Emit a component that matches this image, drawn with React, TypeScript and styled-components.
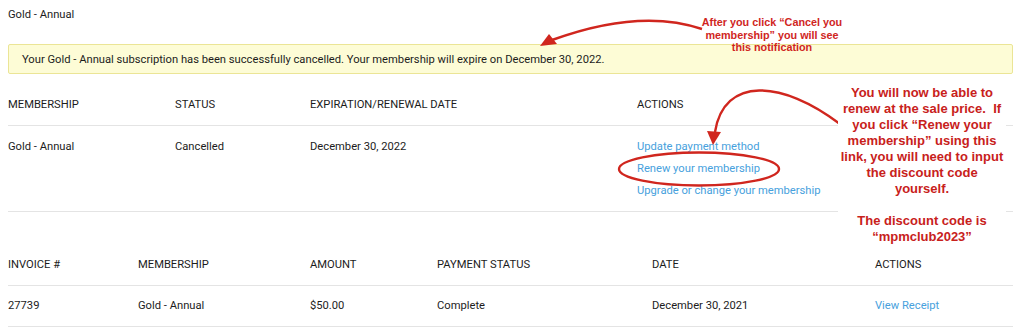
import React from "react";
import styled, { createGlobalStyle } from "styled-components";

const GlobalStyle = createGlobalStyle`
  body {
    margin: 0;
    background: #ffffff;
    font-family: Roboto, "Liberation Sans", Arial, sans-serif;
    font-size: 11.2px;
    color: #1c1c1c;
  }
`;

const ANNOTATION_RED = "#d0261e";

const membershipCols = "167px 135px 327px 1fr";
const invoiceCols = "130px 172px 127px 215px 223px 1fr";

const App = () => {
  return (
    <Page>
      <GlobalStyle />
      <Title>Gold - Annual</Title>
      <Notice>
        Your Gold - Annual subscription has been successfully cancelled. Your membership will expire on
        December 30, 2022.
      </Notice>

      <Table>
        <HeadRow $cols={membershipCols} $top={23}>
          <Cell>MEMBERSHIP</Cell>
          <Cell>STATUS</Cell>
          <Cell>EXPIRATION/RENEWAL DATE</Cell>
          <Cell>ACTIONS</Cell>
        </HeadRow>
        <BodyRow $cols={membershipCols} $top={10} $bottom={9}>
          <Cell $lh={22}>Gold - Annual</Cell>
          <Cell $lh={22}>Cancelled</Cell>
          <Cell $lh={22}>December 30, 2022</Cell>
          <Actions>
            <Link>Update payment method</Link>
            <Link>Renew your membership</Link>
            <Link>Upgrade or change your membership</Link>
          </Actions>
        </BodyRow>
      </Table>

      <Table>
        <HeadRow $cols={invoiceCols} $top={45}>
          <Cell>INVOICE #</Cell>
          <Cell>MEMBERSHIP</Cell>
          <Cell>AMOUNT</Cell>
          <Cell>PAYMENT STATUS</Cell>
          <Cell>DATE</Cell>
          <Cell>ACTIONS</Cell>
        </HeadRow>
        <BodyRow $cols={invoiceCols} $top={12} $bottom={12}>
          <Cell>27739</Cell>
          <Cell>Gold - Annual</Cell>
          <Cell>$50.00</Cell>
          <Cell>Complete</Cell>
          <Cell>December 30, 2021</Cell>
          <Link>View Receipt</Link>
        </BodyRow>
      </Table>

      <Marks width="1024" height="332" viewBox="0 0 1024 332">
        <path d="M702 29 Q640 8 552 40" fill="none" stroke={ANNOTATION_RED} strokeWidth="2.4" />
        <polygon points="540,46 549,34 557,44" fill={ANNOTATION_RED} />
        <path d="M840 124 C782 80 724 76 715 132" fill="none" stroke={ANNOTATION_RED} strokeWidth="2.4" />
        <polygon points="713,145 707,131 721,132" fill={ANNOTATION_RED} />
        <ellipse cx="699" cy="169" rx="80" ry="16.5" fill="none" stroke={ANNOTATION_RED} strokeWidth="2.4" />
      </Marks>

      <NoteSmall>
        After you click “Cancel you
        <br />
        membership” you will see
        <br />
        this notification
      </NoteSmall>

      <NoteLarge>
        You will now be able to
        <br />
        renew at the sale price.&nbsp; If
        <br />
        you click “Renew your
        <br />
        membership” using this
        <br />
        link, you will need to input
        <br />
        the discount code
        <br />
        yourself.
        <br />
        <br />
        The discount code is
        <br />
        “mpmclub2023”
      </NoteLarge>
    </Page>
  );
};

const Page = styled.div`
  position: relative;
  width: 1005px;
  height: 332px;
  padding: 0 0 0 8px;
  overflow: hidden;
`;

const Title = styled.div`
  height: 30px;
  line-height: 30px;
`;

const Notice = styled.div`
  margin-top: 14px;
  height: 28px;
  line-height: 29px;
  padding: 0 13px;
  background: #fdfcd6;
  border: 1px solid #ebe596;
  border-radius: 2px;
`;

const Table = styled.div`
  display: flex;
  flex-direction: column;
`;

const HeadRow = styled.div<{ $cols: string; $top: number }>`
  display: grid;
  grid-template-columns: ${(p) => p.$cols};
  padding: ${(p) => p.$top}px 0 12px;
  line-height: 16px;
  border-bottom: 1px solid #e4e4e4;
`;

const BodyRow = styled.div<{ $cols: string; $top: number; $bottom: number }>`
  display: grid;
  grid-template-columns: ${(p) => p.$cols};
  align-items: start;
  padding: ${(p) => p.$top}px 0 ${(p) => p.$bottom}px;
  line-height: 16px;
  border-bottom: 1px solid #e4e4e4;
`;

const Cell = styled.div<{ $lh?: number }>`
  line-height: ${(p) => (p.$lh ? `${p.$lh}px` : "16px")};
  white-space: nowrap;
`;

const Actions = styled.div`
  display: flex;
  flex-direction: column;
  line-height: 22px;
`;

const Link = styled.a`
  color: #47a1dd;
  text-decoration: none;
  white-space: nowrap;
  cursor: pointer;
`;

const Marks = styled.svg`
  position: absolute;
  left: 0;
  top: 0;
  pointer-events: none;
`;

const NoteSmall = styled.div`
  position: absolute;
  left: 692px;
  top: 16px;
  width: 160px;
  text-align: center;
  font-family: "Liberation Sans", Arial, sans-serif;
  font-weight: 700;
  font-size: 10.8px;
  line-height: 12.5px;
  color: ${ANNOTATION_RED};
`;

const NoteLarge = styled.div`
  position: absolute;
  left: 838px;
  top: 85px;
  width: 168px;
  padding-bottom: 2px;
  background: #ffffff;
  text-align: center;
  font-family: "Liberation Sans", Arial, sans-serif;
  font-weight: 700;
  font-size: 13px;
  line-height: 16px;
  color: #c8211b;
`;

export default App;
